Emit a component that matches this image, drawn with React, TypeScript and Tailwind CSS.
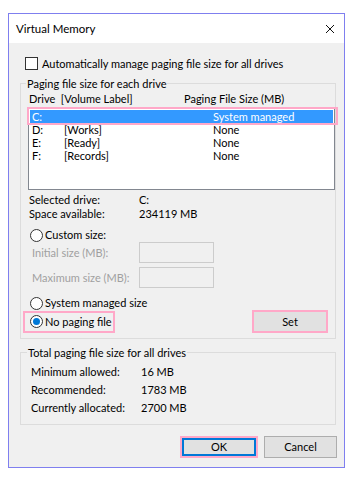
import React from "react";

const font = { fontFamily: 'Lato, "Noto Sans", sans-serif' };

function Radio({ checked }: { checked?: boolean }) {
  return (
    <span className="w-[13px] h-[13px] rounded-full border border-[#333333] bg-white flex items-center justify-center shrink-0">
      {checked && <span className="w-[7px] h-[7px] rounded-full bg-[#0078d7]" />}
    </span>
  );
}

export default function App() {
  return (
    <div className="w-[354px] h-[480px] bg-white pt-[13px] pl-[8px] text-[11px] text-black" style={font}>
      <div className="w-[337px] h-[455px] border border-[#7f7fef] bg-[#f0f0f0] flex flex-col">
        {/* Title bar */}
        <div className="h-[29px] bg-white flex items-center justify-between pl-[7px] pr-[8px]">
          <span className="leading-[14px] text-[11.5px]">Virtual Memory</span>
          <svg width="10" height="10" viewBox="0 0 10 10" className="mr-[1px]">
            <path d="M1 1 L9 9 M9 1 L1 9" stroke="#111" strokeWidth="1" />
          </svg>
        </div>

        {/* Checkbox */}
        <div className="mt-[14px] h-[13px] pl-[16px] flex items-center gap-[4px]">
          <span className="w-[13px] h-[13px] border border-[#333333] bg-white shrink-0" />
          <span className="leading-[14px] whitespace-nowrap">Automatically manage paging file size for all drives</span>
        </div>

        {/* Group box 1 */}
        <div className="mt-[13px] ml-[11px] w-[316px] h-[256px] border border-[#dcdcdc] flex flex-col">
          <div className="-mt-[8px] h-[15px] pl-[5px] flex">
            <span className="bg-[#f0f0f0] px-[1px] leading-[15px] whitespace-nowrap">Paging file size for each drive</span>
          </div>
          <div className="mt-[1px] h-[14px] flex leading-[14px] pl-[8px]">
            <span className="w-[155px] whitespace-nowrap">Drive&nbsp;&nbsp;[Volume Label]</span>
            <span className="whitespace-nowrap">Paging File Size (MB)</span>
          </div>
          <div className="relative mt-[1px] ml-[7px] w-[307px] h-[83px] border border-[#828790] bg-white pt-[2px] px-[1px]">
            <div className="h-[13px] bg-[#3399ff] text-white flex leading-[13px] pl-[2px]">
              <span className="w-[181px]">C:</span>
              <span>System managed</span>
            </div>
            {[
              ["D:", "[Works]", "None"],
              ["E:", "[Ready]", "None"],
              ["F:", "[Records]", "None"],
            ].map(([d, l, s]) => (
              <div key={d} className="h-[13px] flex leading-[13px] pl-[2px]">
                <span className="w-[32px]">{d}</span>
                <span className="w-[149px]">{l}</span>
                <span>{s}</span>
              </div>
            ))}
            <div className="absolute -left-[2px] -top-[1px] w-[311px] h-[18px] border-2 border-[#ffa8c8]" />
          </div>

          <div className="mt-[3px] pl-[8px] flex flex-col">
            <div className="h-[14px] flex leading-[14px]">
              <span className="w-[110px]">Selected drive:</span>
              <span>C:</span>
            </div>
            <div className="h-[14px] flex leading-[14px]">
              <span className="w-[110px]">Space available:</span>
              <span>234119 MB</span>
            </div>
          </div>

          <div className="mt-[7px] h-[14px] pl-[9px] flex items-center gap-[2px]">
            <Radio />
            <span className="leading-[14px]">Custom size:</span>
          </div>
          <div className="h-[21px] pl-[11px] flex items-center">
            <span className="w-[107px] text-[#a0a0a0] leading-[14px] whitespace-nowrap">Initial size (MB):</span>
            <span className="w-[75px] h-[21px] border border-[#cccccc]" />
          </div>
          <div className="mt-[4px] h-[21px] pl-[11px] flex items-center">
            <span className="w-[107px] text-[#a0a0a0] leading-[14px] whitespace-nowrap">Maximum size (MB):</span>
            <span className="w-[75px] h-[21px] border border-[#cccccc]" />
          </div>
          <div className="mt-[8px] h-[14px] pl-[9px] flex items-center gap-[2px]">
            <Radio />
            <span className="leading-[14px] whitespace-nowrap">System managed size</span>
          </div>
          <div className="h-[23px] flex items-center justify-between pl-[2px] pr-[7px]">
            <div className="h-[22px] w-[92px] border-2 border-[#ffa8c8] flex items-center gap-[2px] pl-[5px]">
              <Radio checked />
              <span className="leading-[14px] whitespace-nowrap">No paging file</span>
            </div>
            <div className="w-[76px] h-[23px] border-2 border-[#ffa8c8] bg-[#e1e1e1] flex items-center justify-center">
              <span className="leading-[14px]">Set</span>
            </div>
          </div>
        </div>

        {/* Group box 2 */}
        <div className="mt-[13px] ml-[11px] w-[316px] h-[73px] border border-[#dcdcdc] flex flex-col">
          <div className="-mt-[8px] h-[15px] pl-[6px] flex">
            <span className="bg-[#f0f0f0] px-[1px] leading-[15px] whitespace-nowrap">Total paging file size for all drives</span>
          </div>
          <div className="mt-[3px] pl-[10px] flex flex-col">
            {[
              ["Minimum allowed:", "16 MB"],
              ["Recommended:", "1783 MB"],
              ["Currently allocated:", "2700 MB"],
            ].map(([a, b]) => (
              <div key={a} className="h-[18px] flex items-center leading-[14px]">
                <span className="w-[110px] whitespace-nowrap">{a}</span>
                <span>{b}</span>
              </div>
            ))}
          </div>
        </div>

        {/* Buttons */}
        <div className="mt-auto mb-[9px] flex justify-end gap-[6px] pr-[7px]">
          <div className="w-[78px] h-[22px] border-2 border-[#ffa8c8]">
            <div className="w-full h-full border-2 border-[#0078d7] bg-[#e1e1e1] flex items-center justify-center">
              <span className="leading-[14px]">OK</span>
            </div>
          </div>
          <div className="w-[73px] h-[22px] border border-[#adadad] bg-[#e1e1e1] flex items-center justify-center">
            <span className="leading-[14px]">Cancel</span>
          </div>
        </div>
      </div>
    </div>
  );
}
